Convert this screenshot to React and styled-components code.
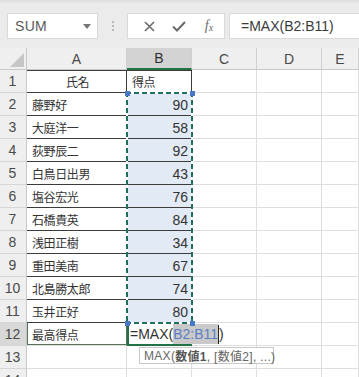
import React from "react";
import styled, { createGlobalStyle } from "styled-components";

const Global = createGlobalStyle`
  html, body { margin: 0; padding: 0; background: #ffffff; overflow: hidden; }
  * { box-sizing: border-box; }
`;

const JP = `"Noto Sans CJK JP", "Noto Sans", sans-serif`;
const LAT = `"Liberation Sans", Arial, sans-serif`;
const GREEN = "#217346";
const TABLE = "#3c3c3c";
const GRID = "#dedede";

const Page = styled.div`
  width: 359px;
  height: 377px;
  overflow: hidden;
  display: flex;
  flex-direction: column;
  background: #fff;
`;

const Toolbar = styled.div`
  height: 48px;
  flex: none;
  display: flex;
  align-items: flex-start;
  padding: 13px 0 0 7px;
  background: linear-gradient(#dedede 0, #ebebeb 4px, #ebebeb 100%);
`;

const NameBox = styled.div`
  width: 91px;
  height: 26px;
  background: #fff;
  border: 1px solid #d9d9d9;
  display: flex;
  align-items: center;
  justify-content: space-between;
  padding: 0 6px 0 7px;
  font: 14px ${LAT};
  color: #5a5a5a;
  letter-spacing: 0.3px;
`;

const Grip = styled.div`
  width: 29px;
  height: 26px;
  display: flex;
  flex-direction: column;
  align-items: center;
  justify-content: center;
  gap: 2px;
  span {
    width: 2px;
    height: 2px;
    background: #a8a8a8;
    border-radius: 1px;
  }
`;

const ButtonGroup = styled.div`
  width: 98px;
  height: 26px;
  background: #fff;
  border: 1px solid #d9d9d9;
  display: flex;
  align-items: center;
  padding-left: 11px;
`;

const IconButton = styled.div`
  width: ${(p) => p.$w}px;
  height: 24px;
  display: flex;
  align-items: center;
  justify-content: center;
  color: #6b6b6b;
`;

const Fx = styled.span`
  font: italic 14px "Liberation Serif", serif;
  color: #6b6b6b;
  sub {
    font-size: 10px;
    vertical-align: -1px;
  }
`;

const FormulaBox = styled.div`
  flex: 1;
  margin-left: 4px;
  height: 26px;
  background: #fff;
  border: 1px solid #d9d9d9;
  border-right: none;
  display: flex;
  align-items: center;
  padding-left: 11px;
  font: 14px ${LAT};
  color: #3a3a3a;
  white-space: nowrap;
`;

const SheetWrap = styled.div`
  position: relative;
  flex: 1;
`;

const Sheet = styled.div`
  display: grid;
  grid-template-columns: 27px 100px 65px 65px 65px 1fr;
  grid-template-rows: 22px;
  grid-auto-rows: 23px;
`;

const ColHead = styled.div`
  background: ${(p) => (p.$active ? "#d3d3d3" : "#efefef")};
  border-right: 1px solid #d0d0d0;
  border-bottom: ${(p) => (p.$active ? `2px solid ${GREEN}` : "1px solid #c8c8c8")};
  display: flex;
  align-items: center;
  justify-content: center;
  font: 14px ${LAT};
  color: ${(p) => (p.$active ? "#2f2f2f" : "#4a4a4a")};
`;

const Corner = styled.div`
  background: #efefef;
  border-right: 1px solid #c8c8c8;
  border-bottom: 1px solid #c8c8c8;
  position: relative;
  &::after {
    content: "";
    position: absolute;
    right: 2px;
    bottom: 2px;
    border-style: solid;
    border-width: 0 0 14px 14px;
    border-color: transparent transparent #c6c6c6 transparent;
  }
`;

const RowHead = styled.div`
  background: ${(p) => (p.$active ? "#d8d8d8" : "#efefef")};
  border-right: 1px solid #c8c8c8;
  border-bottom: 1px solid #d6d6d6;
  display: flex;
  align-items: center;
  justify-content: center;
  font: 14px ${LAT};
  color: #4a4a4a;
  padding-right: 1px;
`;

const Cell = styled.div`
  border-right: 1px solid ${(p) => (p.$table ? TABLE : GRID)};
  border-bottom: 1px solid ${(p) => (p.$table ? TABLE : GRID)};
  background: ${(p) => (p.$fill ? "#e2eaf6" : "#fff")};
  display: flex;
  align-items: center;
  justify-content: ${(p) =>
    p.$align === "right" ? "flex-end" : p.$align === "center" ? "center" : "flex-start"};
  padding: 1px 3px 0 5px;
  font: ${(p) => (p.$num ? `14px ${LAT}` : `12px ${JP}`)};
  letter-spacing: ${(p) => (p.$num ? "0" : "-0.4px")};
  color: #333;
  white-space: nowrap;
  box-shadow: ${(p) => (p.$top ? `inset 0 1px 0 ${TABLE}` : "none")};
`;

const SummaryCell = styled(Cell)`
  box-shadow: inset 1px 0 0 #58745f, inset 0 -1px 0 #58745f;
  border-right: 1px solid #58745f;
`;

const EditCell = styled.div`
  position: relative;
  z-index: 3;
  background: #fff;
  border-left: 2px solid ${GREEN};
  border-bottom: 2px solid ${GREEN};
  display: flex;
  align-items: center;
  padding: 1px 0 0 1px;
  font: 14px ${LAT};
  color: #333;
  white-space: nowrap;
  overflow: visible;
`;

const EditText = styled.span`
  display: inline-flex;
  align-items: center;
  background: #fff;
  height: 20px;
  padding-right: 2px;
`;

const RefText = styled.span`
  color: #5b7fc4;
  background: #c9c9c9;
  height: 20px;
  display: inline-flex;
  align-items: center;
`;

const Caret = styled.span`
  width: 1px;
  height: 19px;
  background: #222;
`;

const Marquee = styled.div`
  position: absolute;
  left: 126px;
  top: 44px;
  width: 67px;
  height: 232px;
  pointer-events: none;
  z-index: 4;
  background:
    repeating-linear-gradient(90deg, #1e6f5c 0 5px, #fff 5px 8px) top / 100% 2px no-repeat,
    repeating-linear-gradient(90deg, #1e6f5c 0 5px, #fff 5px 8px) bottom / 100% 2px no-repeat,
    repeating-linear-gradient(180deg, #1e6f5c 0 5px, #fff 5px 8px) left / 2px 100% no-repeat,
    repeating-linear-gradient(180deg, #1e6f5c 0 5px, #fff 5px 8px) right / 2px 100% no-repeat;
`;

const Handle = styled.div`
  position: absolute;
  width: 5px;
  height: 5px;
  background: #4a78c8;
  z-index: 5;
  left: ${(p) => p.$x}px;
  top: ${(p) => p.$y}px;
`;

const Tooltip = styled.div`
  position: absolute;
  left: 139px;
  top: 299px;
  z-index: 6;
  width: 135px;
  height: 17px;
  padding: 0 4px;
  background: #fff;
  border: 1px solid #c8c8c8;
  display: flex;
  align-items: center;
  font-family: "Liberation Sans", "Noto Sans CJK JP", sans-serif;
  font-size: 12px;
  letter-spacing: 0.3px;
  color: #666;
  white-space: nowrap;
  b {
    font-weight: 700;
    color: #555;
  }
`;

const data = [
  ["藤野好", 90],
  ["大庭洋一", 58],
  ["荻野辰二", 92],
  ["白鳥日出男", 43],
  ["塩谷宏光", 76],
  ["石橋貴英", 84],
  ["浅田正樹", 34],
  ["重田美南", 67],
  ["北島勝太郎", 74],
  ["玉井正好", 80],
];

const Cross = () => (
  <svg width="11" height="11" viewBox="0 0 11 11">
    <path d="M1 1 L10 10 M10 1 L1 10" stroke="#6b6b6b" strokeWidth="1.6" fill="none" />
  </svg>
);

const Check = () => (
  <svg width="14" height="11" viewBox="0 0 14 11">
    <path d="M1 5.5 L5 9.5 L13 1" stroke="#6b6b6b" strokeWidth="2" fill="none" />
  </svg>
);

const Arrow = () => (
  <svg width="8" height="5" viewBox="0 0 8 5">
    <path d="M0 0 H8 L4 5 Z" fill="#777" />
  </svg>
);

const EmptyCells = ({ n }) =>
  Array.from({ length: n }, (_, i) => <Cell key={i} />);

export default function App() {
  return (
    <Page>
      <Global />
      <Toolbar>
        <NameBox>
          <span>SUM</span>
          <Arrow />
        </NameBox>
        <Grip>
          <span />
          <span />
          <span />
        </Grip>
        <ButtonGroup>
          <IconButton $w={20}>
            <Cross />
          </IconButton>
          <IconButton $w={40}>
            <Check />
          </IconButton>
          <IconButton $w={20}>
            <Fx>
              f<sub>x</sub>
            </Fx>
          </IconButton>
        </ButtonGroup>
        <FormulaBox>=MAX(B2:B11)</FormulaBox>
      </Toolbar>
      <SheetWrap>
        <Sheet>
          <Corner />
          <ColHead>A</ColHead>
          <ColHead $active>B</ColHead>
          <ColHead>C</ColHead>
          <ColHead>D</ColHead>
          <ColHead>E</ColHead>

          <RowHead>1</RowHead>
          <Cell $table $top $align="center">氏名</Cell>
          <Cell $table $top>得点</Cell>
          <EmptyCells n={3} />

          {data.map(([name, score], i) => (
            <React.Fragment key={name}>
              <RowHead>{i + 2}</RowHead>
              <Cell $table>{name}</Cell>
              <Cell $table $fill $num $align="right">
                {score}
              </Cell>
              <EmptyCells n={3} />
            </React.Fragment>
          ))}

          <RowHead $active>12</RowHead>
          <SummaryCell>最高得点</SummaryCell>
          <EditCell>
            <EditText>
              =MAX(<RefText>B2:B11</RefText>
              <Caret />)
            </EditText>
          </EditCell>
          <EmptyCells n={3} />

          <RowHead>13</RowHead>
          <EmptyCells n={5} />
          <RowHead>14</RowHead>
          <EmptyCells n={5} />
        </Sheet>
        <Marquee />
        <Handle $x={125} $y={43} />
        <Handle $x={190} $y={43} />
        <Handle $x={125} $y={273} />
        <Handle $x={190} $y={273} />
        <Tooltip>
          MAX(<b>数値1</b>, [数値2], ...)
        </Tooltip>
      </SheetWrap>
    </Page>
  );
}
